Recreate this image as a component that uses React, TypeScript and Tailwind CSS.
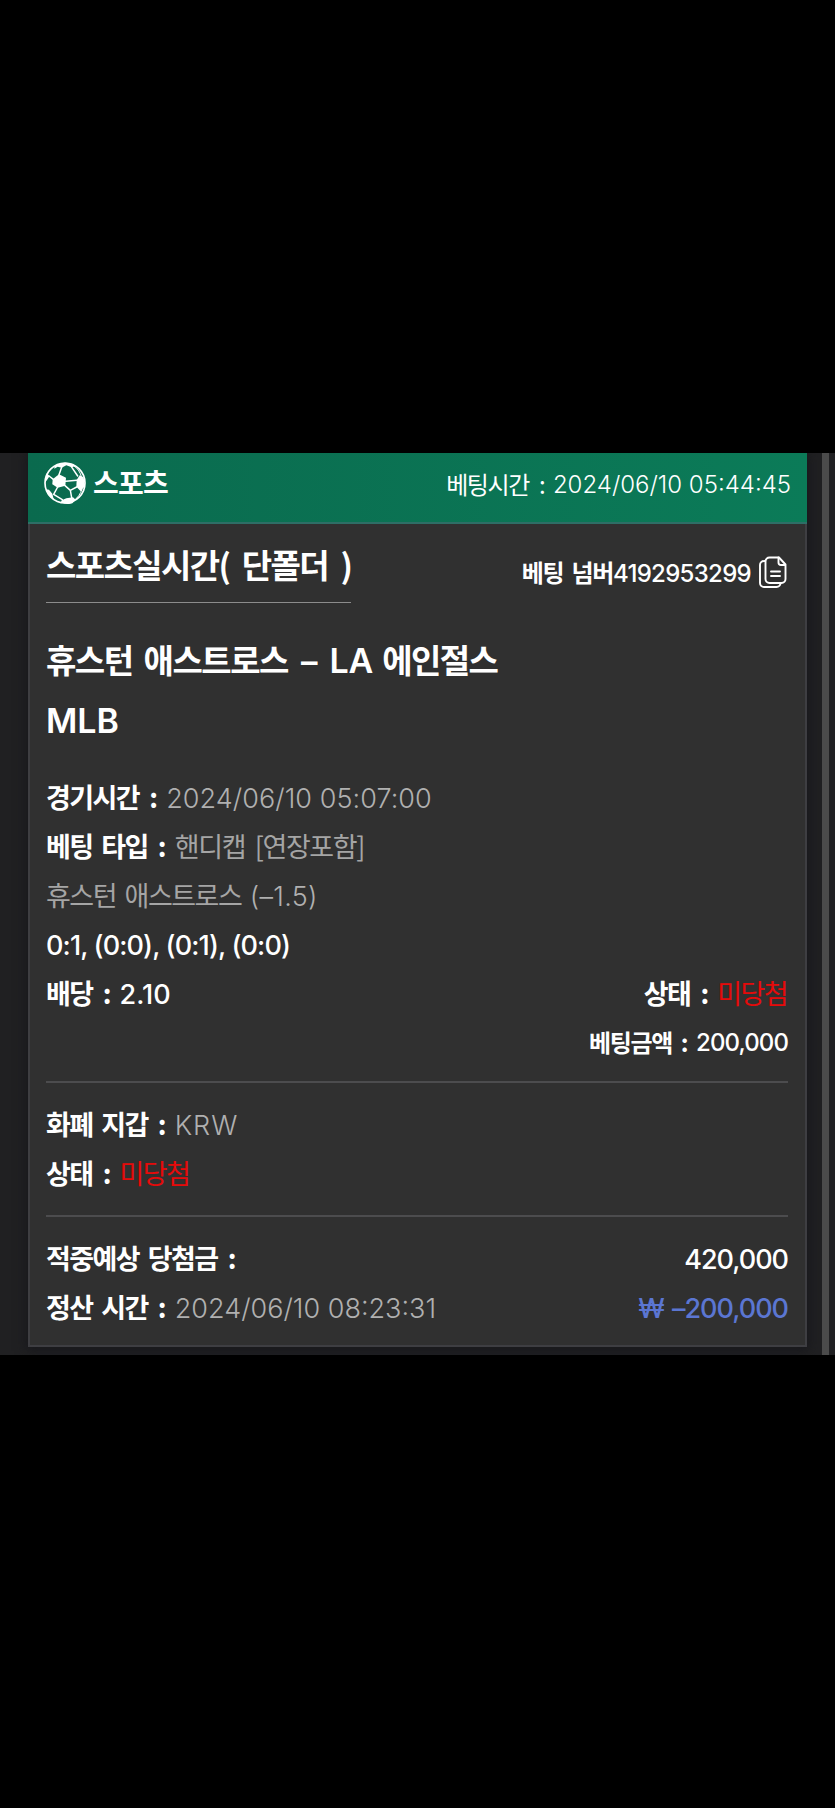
import React from 'react';

interface TextProps {
  children: React.ReactNode;
  className?: string;
}

// Hangul run
const Ko: React.FC<TextProps> = ({ children, className = '' }) => (
  <span className={`pb-[2px] font-['Noto_Sans_CJK_KR',sans-serif] whitespace-pre ${className}`}>{children}</span>
);

// Latin and digits run
const En: React.FC<TextProps> = ({ children, className = '' }) => (
  <span className={`pt-[1px] font-['Inter','Noto_Sans_CJK_KR',sans-serif] whitespace-pre ${className}`}>{children}</span>
);

const Label: React.FC<TextProps> = ({ children, className = '' }) => (
  <Ko className={`font-bold tracking-[-1.55px] [word-spacing:4px] ${className}`}>{children}</Ko>
);

const Colon: React.FC<TextProps> = ({ children, className = '' }) => (
  <Ko className={`w-[27px] pl-[2px] text-center font-bold ${className}`}>{children}</Ko>
);

const Row: React.FC<TextProps> = ({ children, className = '' }) => (
  <div className={`flex h-[49px] items-center text-[27px] leading-none ${className}`}>{children}</div>
);

const SoccerBall = () => (
  <svg className="h-[42px] w-[42px]" viewBox="5 6 126 126" fill="none" stroke="white">
    <circle cx="68" cy="69" r="60" strokeWidth="5" />
    <g fill="white" stroke="none">
      <path d="M31 58l19-15 21 10-2 24-23 6-16-10z" />
      <path d="M103 60l9-14 12 6 4 26-13 16-13-14z" />
      <path d="M36 19C54 6 82 4 100 18l-12 4-16-6-14 7-12-3-10 6z" />
      <path d="M58 121l14-6 20-3 8 7-10 11c-12 4-24 2-34-4z" />
      <path d="M9 54l4-14 9 8-8 12-6 8z" />
      <path d="M11 88l9 1 10 12 4 17C22 112 13 100 11 88z" />
    </g>
    <g strokeWidth="4.500" strokeLinecap="round">
      <path d="M58 22l-8 22M87 20l19 28M70 64l34-3M68 77l16 14M84 91l19-10M84 91l4 22M46 81l-12 22M33 58l-13-10M34 103l26 16" />
      <path d="M94 17c11 7 19 18 23 32" strokeWidth="3" />
      <path d="M119 88c-5 14-12 24-22 32" strokeWidth="3" />
    </g>
  </svg>
);

const CopyIcon = () => (
  <svg
    className="h-[32px] w-[28px]"
    viewBox="0 0 28 32"
    fill="none"
    stroke="white"
    strokeWidth="1.900"
    strokeLinecap="round"
    strokeLinejoin="round"
  >
    <path d="M10.500 1.500h9.500l6.500 7v14.500a4 4 0 0 1-4 4H10.500a4 4 0 0 1-4-4V5.500a4 4 0 0 1 4-4z" />
    <path d="M19.500 1.500V6.500a2.500 2.500 0 0 0 2.500 2.500h4M6 5H5a4 4 0 0 0-4 4v18a4 4 0 0 0 4 4h12.500a4 4 0 0 0 4-4M12 15.500h9M12 20h9" />
  </svg>
);

const App: React.FC = () => {
  return (
    <div className="h-[1808px] w-[835px] overflow-hidden bg-black pt-[453px] text-white">
      <div className="flex h-[902px] overflow-hidden bg-[#202022]">
        <div className="ml-[28px] h-[894px] w-[779px] shrink-0 shadow-[0_2px_10px_2px_#18181c]">
          <div className="flex h-[71px] justify-between border-b-2 border-[#2e6e66] bg-linear-to-r from-[#0a6a4e] to-[#0b7b58] pr-[16px] pl-[16px]">
            <div className="flex h-[59px] items-center">
              <SoccerBall />
              <Ko className="ml-[7px] text-[28px] leading-none font-bold tracking-[-0.8px]">스포츠</Ko>
            </div>
            <div className="flex h-[63px] items-center text-[24px] leading-none font-light">
              <Ko className="font-normal tracking-[-1.4px]">베팅시간</Ko>
              <Ko className="w-[24px] pl-[3px] text-center font-normal">:</Ko>
              <En>2024/06/10 05:44:45</En>
            </div>
          </div>

          <div className="h-[823px] border-x-2 border-b-2 border-[#3e3e42] bg-[#303030] pr-[17px] pl-[16px]">
            <div className="flex h-[79px] justify-between">
              <div className="flex h-[79px] items-center border-b border-[#8c8c8c] pt-[5px] text-[33px] leading-none">
                <Ko className="font-bold tracking-[-1.6px] [word-spacing:6.500px]">스포츠실시간( 단폴더 )</Ko>
              </div>
              <div className="flex h-[98px] items-center text-[24px] leading-none">
                <Ko className="font-bold tracking-[-1.3px] [word-spacing:4px]">베팅 넘버</Ko>
                <En className="font-medium tracking-[-0.7px]">4192953299</En>
                <div className="mr-[1px] ml-[8px] pb-[2px]">
                  <CopyIcon />
                </div>
              </div>
            </div>

            <div className="mt-[27px] flex h-[61px] items-center text-[33px] leading-none font-bold">
              <Ko className="tracking-[-1.500px] [word-spacing:5px]">휴스턴 애스트로스</Ko>
              <En className="ml-[13px] font-semibold">–</En>
              <En className="mr-[9px] ml-[12px] text-[34px] font-semibold">LA</En>
              <Ko className="tracking-[-1.6px]">에인절스</Ko>
            </div>
            <div className="flex h-[59px] items-center text-[34px] leading-none font-semibold">
              <En>MLB</En>
            </div>

            <Row className="mt-[23px]">
              <Label>경기시간</Label>
              <Colon>:</Colon>
              <En className="font-light tracking-[0.05px] text-[#b0b0b0]">2024/06/10 05:07:00</En>
            </Row>
            <Row>
              <Label>베팅 타입</Label>
              <Colon>:</Colon>
              <Ko className="font-normal tracking-[-1.4px] text-[#a5a5a5] [word-spacing:5px]">핸디캡 [연장포함]</Ko>
            </Row>
            <Row>
              <Ko className="font-normal tracking-[-1.5px] text-[#a5a5a5] [word-spacing:4px]">휴스턴 애스트로스 </Ko>
              <En className="font-light tracking-[0.3px] text-[#b0b0b0]">(–1.5)</En>
            </Row>
            <Row>
              <En className="font-medium tracking-[-0.87px]">0:1, (0:0), (0:1), (0:0)</En>
            </Row>
            <Row className="justify-between">
              <div className="flex items-center">
                <Label>배당</Label>
                <Colon>:</Colon>
                <En className="font-medium">2.10</En>
              </div>
              <div className="flex items-center">
                <Label>상태</Label>
                <Colon>:</Colon>
                <Ko className="mr-[1px] font-normal tracking-[-1.6px] text-[#e60a0a]">미당첨</Ko>
              </div>
            </Row>
            <div className="flex h-[49px] items-center justify-end text-[24px] leading-none">
              <Ko className="font-bold tracking-[-1.3px]">베팅금액</Ko>
              <Ko className="w-[24px] pl-[1px] text-center font-bold">:</Ko>
              <En className="font-medium tracking-[-0.9px]">200,000</En>
            </div>

            <div className="mt-[14px] border-t-2 border-[#4c4c4e] pt-[17px]">
              <Row>
                <Label>화폐 지갑</Label>
                <Colon>:</Colon>
                <En className="font-light tracking-[0.9px] text-[#b0b0b0]">KRW</En>
              </Row>
              <Row>
                <Label>상태</Label>
                <Colon>:</Colon>
                <Ko className="font-normal tracking-[-1.6px] text-[#e60a0a]">미당첨</Ko>
              </Row>
            </div>

            <div className="mt-[17px] border-t-2 border-[#4c4c4e] pt-[17px]">
              <Row className="justify-between">
                <div className="flex items-center">
                  <Label>적중예상 당첨금</Label>
                  <Colon>:</Colon>
                </div>
                <En className="font-medium tracking-[-1px]">420,000</En>
              </Row>
              <Row className="justify-between">
                <div className="flex items-center">
                  <Label>정산 시간</Label>
                  <Colon>:</Colon>
                  <En className="font-light text-[#b0b0b0]">2024/06/10 08:23:31</En>
                </div>
                <En className="font-medium tracking-[-1px] text-[#5b76d2] [word-spacing:2px]">₩ –200,000</En>
              </Row>
            </div>
          </div>
        </div>
        <div className="ml-[15px] w-[7px] bg-[#4b4b4b]" />
      </div>
    </div>
  );
};

export default App;
